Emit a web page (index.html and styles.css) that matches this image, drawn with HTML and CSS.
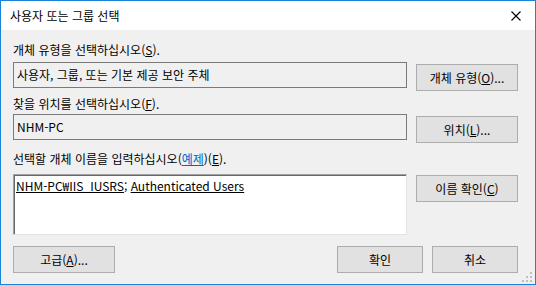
FILE: index.html
```html
<!DOCTYPE html>
<html lang="ko">
<head>
    <meta charset="UTF-8">
    <title>사용자 또는 그룹 선택</title>
    <link rel="stylesheet" href="styles.css">
</head>
<body>
    <div class="dialog">
        <div class="title-bar">
            <span class="title-text">사용자 또는 그룹 선택</span>
            <svg class="close-icon" width="10" height="10" viewBox="0 0 10 10">
                <path d="M0.5 0.5 L9.5 9.5 M9.5 0.5 L0.5 9.5" stroke="#000" stroke-width="1.1" fill="none"/>
            </svg>
        </div>

        <div class="dialog-body">
            <div class="field-label first">개체 유형을 선택하십시오(<u>S</u>).</div>
            <div class="field-row">
                <div class="readonly-box">사용자, 그룹, 또는 기본 제공 보안 주체</div>
                <button class="btn">개체 유형(<u>O</u>)...</button>
            </div>

            <div class="field-label second">찾을 위치를 선택하십시오(<u>F</u>).</div>
            <div class="field-row">
                <div class="readonly-box">NHM-PC</div>
                <button class="btn">위치(<u>L</u>)...</button>
            </div>

            <div class="field-label third">선택할 개체 이름을 입력하십시오(<a href="#" class="example-link">예제</a>)(<u>E</u>).</div>
            <div class="field-row names">
                <div class="names-box"><u>NHM-PC₩IIS_IUSRS</u>; <u>Authenticated Users</u></div>
                <button class="btn check-btn">이름 확인(<u>C</u>)</button>
            </div>

            <div class="bottom-row">
                <button class="btn">고급(<u>A</u>)...</button>
                <div class="bottom-right">
                    <button class="btn small">확인</button>
                    <button class="btn small">취소</button>
                </div>
            </div>
        </div>

        <svg class="size-grip" width="12" height="12" viewBox="0 0 12 12">
            <rect x="9" y="1" width="2" height="2" fill="#bfbfbf"/>
            <rect x="5" y="5" width="2" height="2" fill="#bfbfbf"/>
            <rect x="9" y="5" width="2" height="2" fill="#bfbfbf"/>
            <rect x="1" y="9" width="2" height="2" fill="#bfbfbf"/>
            <rect x="5" y="9" width="2" height="2" fill="#bfbfbf"/>
            <rect x="9" y="9" width="2" height="2" fill="#bfbfbf"/>
        </svg>
    </div>
</body>
</html>
```

FILE: styles.css
```css
* {
    margin: 0;
    padding: 0;
    box-sizing: border-box;
}

body {
    font-family: "Noto Sans CJK KR", "Noto Sans", sans-serif;
    font-size: 12px;
    line-height: 16px;
    color: #000;
    background: #f0f0f0;
}

.dialog {
    position: relative;
    width: 536px;
    height: 285px;
    border: 1px solid #1883d7;
    background: #f0f0f0;
}

.title-bar {
    height: 29px;
    background: #fff;
    display: flex;
    align-items: center;
    justify-content: space-between;
    padding: 0 14px 0 9px;
}

.title-text {
    font-size: 12px;
    padding-top: 1px;
}

.close-icon {
    display: block;
}

.dialog-body {
    padding: 0 12px;
}

.field-label {
    height: 16px;
}

.field-label.first {
    margin-top: 12px;
    margin-bottom: 4px;
}

.field-label.second {
    margin-top: 5px;
    margin-bottom: 2px;
}

.field-label.third {
    margin-top: 8px;
    margin-bottom: 7px;
}

.example-link {
    color: #0066cc;
    text-decoration: underline;
}

.field-row {
    display: grid;
    grid-template-columns: 394px 102px;
    column-gap: 9px;
    align-items: start;
}

.readonly-box {
    height: 26px;
    border: 1px solid #7a7a7a;
    background: #f0f0f0;
    padding: 4px 3px;
    white-space: nowrap;
}

.field-row .btn {
    margin-top: 2px;
}

.names-box {
    height: 61px;
    background: #fff;
    border-top: 1px solid #a0a0a0;
    border-left: 1px solid #a0a0a0;
    border-right: 1px solid #e3e3e3;
    border-bottom: 1px solid #e3e3e3;
    box-shadow: inset 1px 1px 0 #696969;
    padding: 3px 2px;
    white-space: nowrap;
}

.field-row.names .check-btn {
    margin-top: 1px;
}

.btn {
    height: 27px;
    width: 102px;
    background: #e1e1e1;
    border: 1px solid #adadad;
    font-family: inherit;
    font-size: 12px;
    line-height: 16px;
    color: #000;
    display: flex;
    align-items: center;
    justify-content: center;
}

.btn.small {
    width: 86px;
}

.bottom-row {
    display: flex;
    justify-content: space-between;
    width: 505px;
    margin-top: 11px;
}

.bottom-right {
    display: flex;
    gap: 9px;
}

.size-grip {
    position: absolute;
    right: 2px;
    bottom: 1px;
}
```
